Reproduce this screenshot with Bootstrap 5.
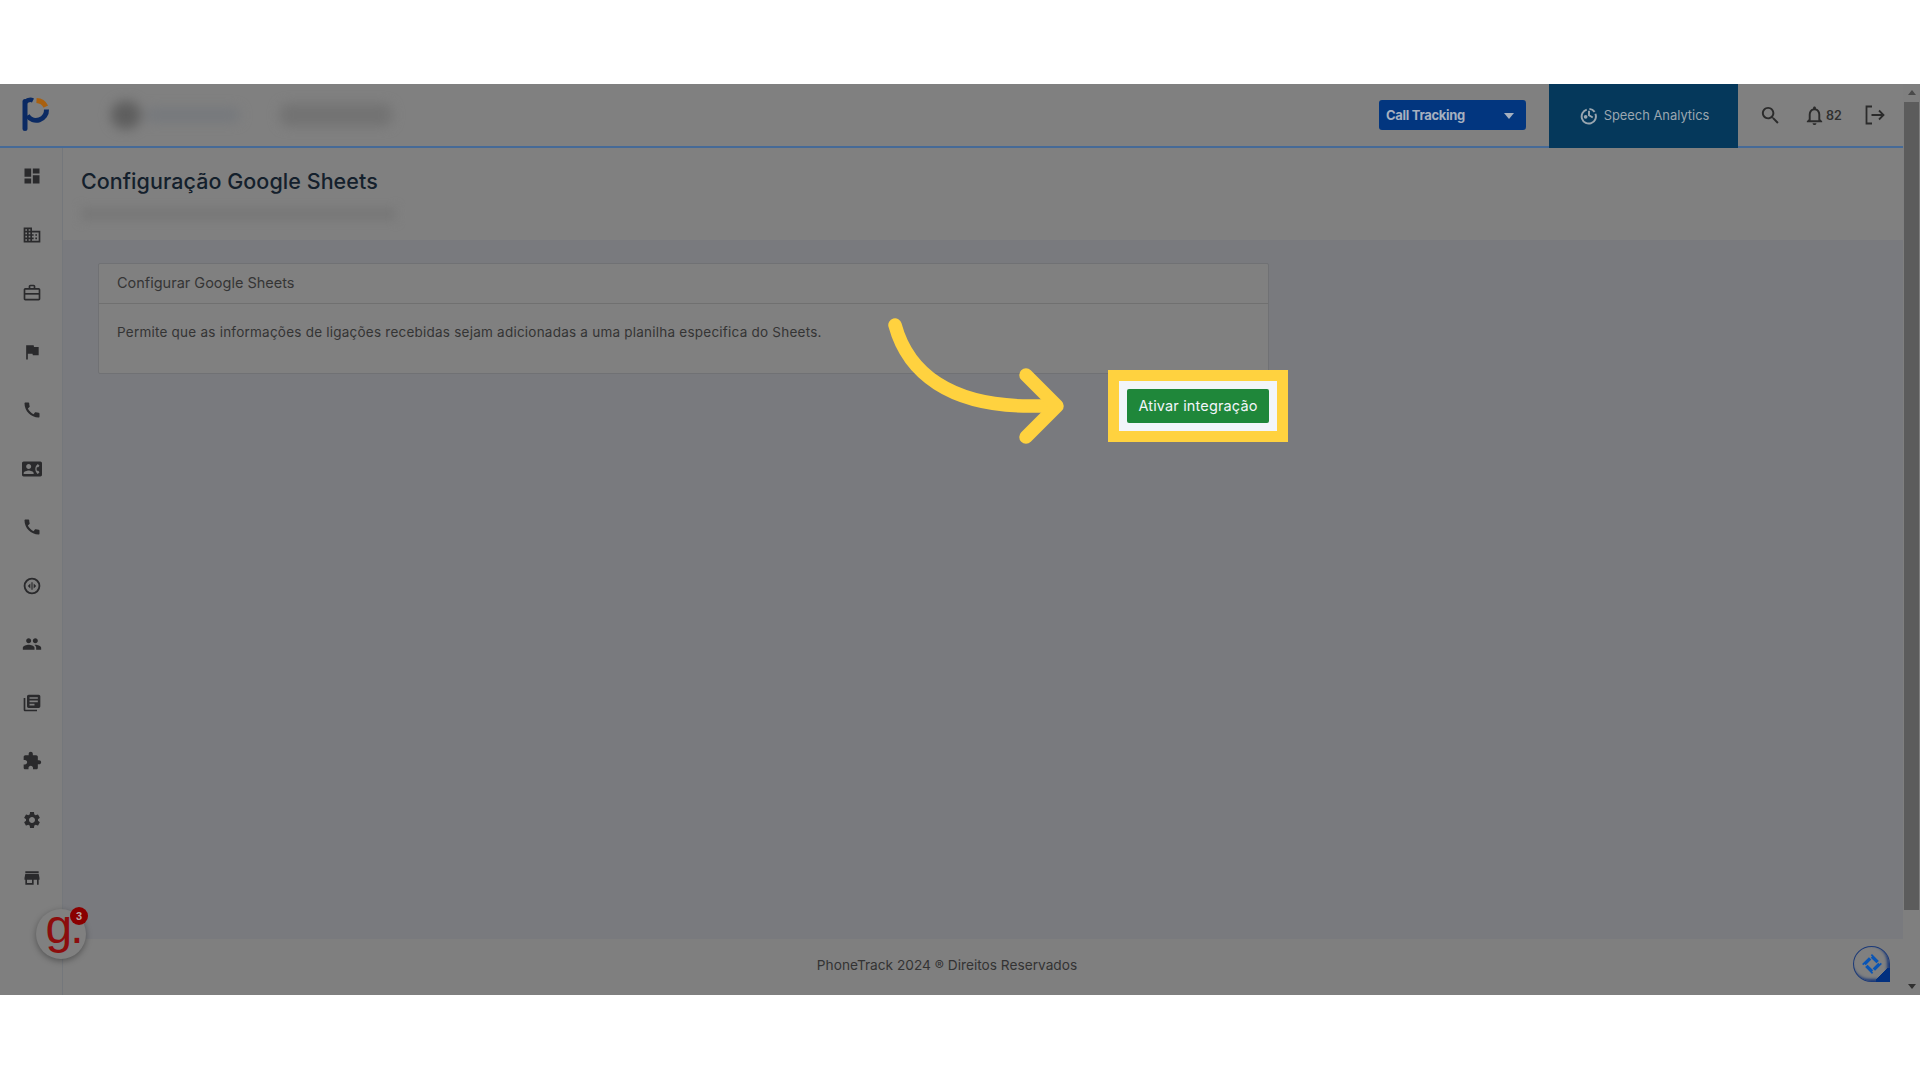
<!DOCTYPE html>
<html lang="pt-BR">
<head>
<meta charset="utf-8">
<title>Configuração Google Sheets</title>
<link href="https://cdn.jsdelivr.net/npm/bootstrap@5.3.0/dist/css/bootstrap.min.css" rel="stylesheet">
<style>
html,body{height:100%;}
body{background:#fff;font-family:"Inter","Open Sans","Liberation Sans",sans-serif;overflow:hidden;padding-top:84px;}
.stage{height:911px;position:relative;background:#797a7e;}
.pagecol{width:1903px;}
.topbar{height:64px;background:#808080;border-bottom:2px solid #466a97;}
.brand-cell{width:20px;margin-left:20px;margin-right:22px;margin-top:-1px;}
.blur-group{filter:blur(6px);}
.chip-a{width:30px;height:28px;border-radius:14px;background:#5e5e5e;margin-left:49px;}
.chip-b{width:95px;height:14px;border-radius:7px;background:#75787c;margin-left:4px;}
.chip-c{width:112px;height:22px;border-radius:8px;background:#727272;margin-left:40px;}
.product-btn{width:147px;height:30px;background:#02367f;border-radius:3px;color:#a6b0bf;font-size:13px;font-weight:700;letter-spacing:-.3px;padding:1px 12px 0 7px;margin-right:23px;}
.caret-down{width:0;height:0;border-left:5px solid transparent;border-right:5px solid transparent;border-top:6px solid #a6b0bf;}
.speech{width:189px;height:64px;margin-bottom:-2px;padding:0 0 1px 2px;gap:6px;background:#05385b;color:#9aa6b0;font-size:12.9px;}
.tool-row{width:165px;padding-left:21px;}
.bell-num{font-size:12.5px;font-weight:600;color:#303030;line-height:1;margin-top:2px;}
.bell-ico{margin-left:21px;}
.out-ico{margin-left:23px;}
.sidebar{width:63px;background:#7f7f7f;border-right:1px solid #74777b;padding-top:18px;padding-left:1px;gap:38.5px;}
.sidebar svg{width:20px;height:20px;display:block;fill:#2a2a2c;}
.titlebar{background:#808080;height:92px;padding:18px 0 0 18px;}
.page-title{font-size:21.5px;font-weight:500;color:#14202c;margin:0;line-height:30px;letter-spacing:.05px;}
.crumb-blur{width:315px;height:14px;background:#787878;filter:blur(5px);margin-top:11px;}
.content-area{padding:23px 0 0 35px;}
.config-card{width:1171px;height:111px;background:#808080;border:1px solid #707174;border-radius:2px;color:#303030;}
.config-head{height:40px;padding:0 18px 2px;border-bottom:1px solid #707070;font-size:14.5px;color:#353535;}
.config-body{padding:18px 18px;font-size:13.5px;letter-spacing:.23px;color:#343434;}
.foot{height:56px;background:#7f7f7f;font-size:13.7px;color:#333;padding-bottom:3px;padding-right:72px;}
.scroll-rail{width:17px;background:#7f7f7f;}
.scroll-thumb{background:#5c5c5c;height:808px;margin:1px 1px 0;}
.tri-up{width:0;height:0;border-left:4px solid transparent;border-right:4px solid transparent;border-bottom:5px solid #4a4a4a;}
.tri-down{width:0;height:0;border-left:4px solid transparent;border-right:4px solid transparent;border-top:5px solid #2f2f2f;}
.rail-end{height:17px;}
.spot{position:absolute;left:1108px;top:286px;width:180px;height:72px;border:11px solid #ffd23f;background:#f2f5fa;}
.spot-btn{background:#1f873a;color:#f2f5fa;font-size:14.5px;font-weight:400;letter-spacing:.15px;width:142px;height:34px;padding:0;border:0;border-radius:2px;}
.pointer{position:absolute;left:880px;top:220px;width:190px;height:150px;}
.g-widget{position:absolute;left:36px;top:825px;width:50px;height:50px;padding-left:5px;border-radius:50%;background:#808080;box-shadow:0 2px 6px rgba(0,0,0,.35);color:#8c0d0d;font-family:"Liberation Sans",sans-serif;font-size:48px;line-height:35px;letter-spacing:-2px;text-align:center;}
.g-count{position:absolute;left:34px;top:-2px;width:18px;height:18px;border-radius:50%;background:#8a0000;color:#b9a6a6;font-size:11px;font-weight:700;letter-spacing:0;line-height:18px;}
.help-widget{position:absolute;left:1853px;top:862px;width:37px;height:36px;border-radius:50% 50% 0 50%;background:#808080;border:1px solid #1c3a78;box-shadow:inset -2px -2px 3px #1c3a78;}
.help-corner{position:absolute;right:-1px;bottom:-1px;width:14px;height:14px;background:linear-gradient(135deg,transparent 40%,#02307f 41%);}
</style>
</head>
<body>
<div class="stage d-flex">
  <div class="pagecol d-flex flex-column">
    <header class="topbar d-flex align-items-center">
      <div class="brand-cell flex-shrink-0">
        <svg width="30" height="38" viewBox="0 0 30 38" fill="none"><path d="M5 5.5v27" stroke="#0b2a63" stroke-width="5" stroke-linecap="round"/><path d="M5 6.5C8 3.5 10 3 13 4.5" stroke="#0b2a63" stroke-width="4.5"/><path d="M16.5 4.6c4 .2 7.5 2.3 9.3 6" stroke="#a9600f" stroke-width="5"/><path d="M26.5 13.5a10.3 10.3 0 0 1-19 6" stroke="#0b2a63" stroke-width="5"/></svg>
      </div>
      <div class="blur-group d-flex align-items-center">
        <div class="chip-a"></div>
        <div class="chip-b"></div>
        <div class="chip-c"></div>
      </div>
      <div class="ms-auto d-flex align-items-center">
        <div class="product-btn d-flex align-items-center justify-content-between"><span>Call Tracking</span><span class="caret-down"></span></div>
        <div class="speech d-flex align-items-center justify-content-center">
          <svg width="18" height="18" viewBox="0 0 24 24" fill="none" stroke="#9aa6b0" stroke-width="2.6"><path d="M9 3.5A9.5 9.5 0 1 0 20.5 9"/><path d="M12.5 2.5a9.5 9.5 0 0 1 7 4"/><path d="M12 5l0 6 5 3"/><circle cx="7.5" cy="13" r="1.2"/></svg>
          <span>Speech Analytics</span>
        </div>
        <div class="tool-row d-flex align-items-center">
          <svg width="23" height="23" viewBox="0 0 24 24" fill="#2b2b2b"><path d="M15.5 14h-.79l-.28-.27C15.41 12.59 16 11.11 16 9.5 16 5.91 13.09 3 9.5 3S3 5.91 3 9.5 5.91 16 9.5 16c1.61 0 3.09-.59 4.23-1.57l.27.28v.79l5 4.99L20.49 19l-4.99-5zm-6 0C7.01 14 5 11.99 5 9.5S7.01 5 9.5 5 14 7.01 14 9.5 11.99 14 9.5 14z"/></svg>
          <svg class="bell-ico" width="23" height="23" viewBox="0 0 24 24" fill="#2b2b2b"><path d="M12 22c1.1 0 2-.9 2-2h-4c0 1.1.9 2 2 2zm6-6v-5c0-3.07-1.63-5.64-4.5-6.32V4c0-.83-.67-1.5-1.5-1.5s-1.5.67-1.5 1.5v.68C7.64 5.36 6 7.92 6 11v5l-2 2v1h16v-1l-2-2zm-2 1H8v-6c0-2.48 1.51-4.5 4-4.5s4 2.02 4 4.5v6z"/></svg>
          <span class="bell-num">82</span>
          <svg class="out-ico" width="20" height="20" viewBox="0 0 20 20" fill="none" stroke="#2b2b2b" stroke-width="1.8"><path d="M7 1.5H1.5v17H7M6.5 10H18.5M14 5.5l4.5 4.5-4.5 4.5"/></svg>
        </div>
      </div>
    </header>
    <div class="d-flex flex-grow-1">
      <nav class="sidebar d-flex flex-column align-items-center flex-shrink-0">
        <svg viewBox="0 0 24 24"><path d="M3 13h8V3H3v10zm0 8h8v-6H3v6zm10 0h8V11h-8v10zm0-18v6h8V3h-8z"/></svg>
        <svg viewBox="0 0 24 24"><path d="M12 7V3H2v18h20V7H12zM6 19H4v-2h2v2zm0-4H4v-2h2v2zm0-4H4V9h2v2zm0-4H4V5h2v2zm4 12H8v-2h2v2zm0-4H8v-2h2v2zm0-4H8V9h2v2zm0-4H8V5h2v2zm10 12h-8v-2h2v-2h-2v-2h2v-2h-2V9h8v10zm-2-8h-2v2h2v-2zm0 4h-2v2h2v-2z"/></svg>
        <svg viewBox="0 0 24 24"><path d="M14 6V4h-4v2h4zM4 8v11h16V8H4zm16-2c1.11 0 2 .89 2 2v11c0 1.11-.89 2-2 2H4c-1.11 0-2-.89-2-2l.01-11c0-1.11.88-2 1.99-2h4V4c0-1.11.89-2 2-2h4c1.11 0 2 .89 2 2v2h4z"/><path d="M3 12h18v2H3z"/></svg>
        <svg viewBox="0 0 24 24"><path d="M14.4 6L14 4H5v17h2v-7h5.6l.4 2h7V6z"/></svg>
        <svg viewBox="0 0 24 24"><path d="M20.01 15.38c-1.23 0-2.42-.2-3.53-.56-.35-.12-.74-.03-1.01.24l-1.57 1.97c-2.83-1.35-5.48-3.9-6.89-6.83l1.95-1.66c.27-.28.35-.67.24-1.02-.37-1.11-.56-2.3-.56-3.53 0-.54-.45-.99-.99-.99H4.19C3.65 3 3 3.24 3 3.99 3 13.28 10.73 21 20.01 21c.71 0 .99-.63.99-1.18v-3.45c0-.54-.45-.99-.99-.99z"/></svg>
        <svg viewBox="0 0 24 24"><path d="M22 3H2C.9 3 0 3.9 0 5v14c0 1.1.9 2 2 2h20c1.1 0 1.99-.9 1.99-2L24 5c0-1.1-.9-2-2-2zM8 6c1.66 0 3 1.34 3 3s-1.34 3-3 3-3-1.34-3-3 1.34-3 3-3zm6 12H2v-1c0-2 4-3.1 6-3.1s6 1.1 6 3.1v1zm3.85-4h1.64L21 16l-1.99 1.99c-1.31-.98-2.28-2.38-2.73-3.99-.18-.64-.28-1.31-.28-2s.1-1.36.28-2c.45-1.62 1.42-3.01 2.73-3.99L21 8l-1.51 2h-1.64c-.22.63-.35 1.3-.35 2s.13 1.37.35 2z"/></svg>
        <svg viewBox="0 0 24 24"><path d="M20.01 15.38c-1.23 0-2.42-.2-3.53-.56-.35-.12-.74-.03-1.01.24l-1.57 1.97c-2.83-1.35-5.48-3.9-6.89-6.83l1.95-1.66c.27-.28.35-.67.24-1.02-.37-1.11-.56-2.3-.56-3.53 0-.54-.45-.99-.99-.99H4.19C3.65 3 3 3.24 3 3.99 3 13.28 10.73 21 20.01 21c.71 0 .99-.63.99-1.18v-3.45c0-.54-.45-.99-.99-.99z"/></svg>
        <svg viewBox="0 0 24 24"><path d="M12 2a10 10 0 1 0 0 20 10 10 0 0 0 0-20zm0 2.2a7.8 7.8 0 1 1 0 15.6 7.8 7.8 0 0 1 0-15.6z"/><path d="M11.3 7.5h1.4v9h-1.4zM10 9v6l-3-3zM14 9l3 3-3 3z"/></svg>
        <svg viewBox="0 0 24 24"><path d="M16 11c1.66 0 2.99-1.34 2.99-3S17.66 5 16 5c-1.66 0-3 1.34-3 3s1.34 3 3 3zm-8 0c1.66 0 2.99-1.34 2.99-3S9.66 5 8 5C6.34 5 5 6.34 5 8s1.34 3 3 3zm0 2c-2.33 0-7 1.17-7 3.5V19h14v-2.5c0-2.33-4.67-3.5-7-3.5zm8 0c-.29 0-.62.02-.97.05 1.16.84 1.97 1.97 1.97 3.45V19h6v-2.5c0-2.33-4.67-3.5-7-3.5z"/></svg>
        <svg viewBox="0 0 24 24"><path d="M4 6H2v14c0 1.1.9 2 2 2h14v-2H4V6zm16-4H8c-1.1 0-2 .9-2 2v12c0 1.1.9 2 2 2h12c1.1 0 2-.9 2-2V4c0-1.1-.9-2-2-2zm-1 9H9V9h10v2zm-4 4H9v-2h6v2zm4-8H9V5h10v2z"/></svg>
        <svg viewBox="0 0 24 24"><path d="M20.5 11H19V7c0-1.1-.9-2-2-2h-4V3.5C13 2.12 11.88 1 10.5 1S8 2.12 8 3.5V5H4c-1.1 0-1.99.9-1.99 2v3.8H3.5c1.49 0 2.7 1.21 2.7 2.7s-1.21 2.7-2.7 2.7H2V20c0 1.1.9 2 2 2h3.8v-1.5c0-1.49 1.21-2.7 2.7-2.7 1.49 0 2.7 1.21 2.7 2.7V22H17c1.1 0 2-.9 2-2v-4h1.5c1.38 0 2.5-1.12 2.5-2.5S21.88 11 20.5 11z"/></svg>
        <svg viewBox="0 0 24 24"><path d="M19.14 12.94c.04-.3.06-.61.06-.94 0-.32-.02-.64-.07-.94l2.03-1.58c.18-.14.23-.41.12-.61l-1.92-3.32c-.12-.22-.37-.29-.59-.22l-2.39.96c-.5-.38-1.03-.7-1.62-.94l-.36-2.54c-.04-.24-.24-.41-.48-.41h-3.84c-.24 0-.43.17-.47.41l-.36 2.54c-.59.24-1.13.57-1.62.94l-2.39-.96c-.22-.08-.47 0-.59.22L2.74 8.87c-.12.21-.08.47.12.61l2.03 1.58c-.05.3-.09.63-.09.94s.02.64.07.94l-2.03 1.58c-.18.14-.23.41-.12.61l1.92 3.32c.12.22.37.29.59.22l2.39-.96c.5.38 1.03.7 1.62.94l.36 2.54c.05.24.24.41.48.41h3.84c.24 0 .44-.17.47-.41l.36-2.54c.59-.24 1.13-.56 1.62-.94l2.39.96c.22.08.47 0 .59-.22l1.92-3.32c.12-.22.07-.47-.12-.61l-2.01-1.58zM12 15.6c-1.98 0-3.6-1.62-3.6-3.6s1.62-3.6 3.6-3.6 3.6 1.62 3.6 3.6-1.62 3.6-3.6 3.6z"/></svg>
        <svg viewBox="0 0 24 24"><path d="M20 4H4v2h16V4zm1 10v-2l-1-5H4l-1 5v2h1v6h10v-6h4v6h2v-6h1zm-9 4H6v-4h6v4z"/></svg>
      </nav>
      <main class="flex-grow-1 d-flex flex-column">
        <div class="titlebar">
          <h1 class="page-title">Configuração Google Sheets</h1>
          <div class="crumb-blur"></div>
        </div>
        <div class="content-area flex-grow-1">
          <div class="config-card">
            <div class="config-head d-flex align-items-center">Configurar Google Sheets</div>
            <div class="config-body">Permite que as informações de ligações recebidas sejam adicionadas a uma planilha especifica do Sheets.</div>
          </div>
        </div>
        <footer class="foot d-flex align-items-center justify-content-center">PhoneTrack 2024 ® Direitos Reservados</footer>
      </main>
    </div>
  </div>
  <div class="scroll-rail d-flex flex-column flex-shrink-0">
    <div class="rail-end d-flex align-items-center justify-content-center"><span class="tri-up"></span></div>
    <div class="scroll-thumb"></div>
    <div class="mt-auto rail-end d-flex align-items-center justify-content-center"><span class="tri-down"></span></div>
  </div>

  <svg class="pointer" viewBox="0 0 190 150" fill="none" stroke="#ffd23f" stroke-width="13.5" stroke-linecap="round" stroke-linejoin="round"><path d="M15 21C28 69 70 102 150 102L175 102"/><path d="M146 71l31 31-31 31"/></svg>
  <div class="spot d-flex align-items-center justify-content-center"><button type="button" class="btn spot-btn">Ativar integração</button></div>

  <div class="g-widget">g.<span class="g-count">3</span></div>
  <div class="help-widget d-flex align-items-center justify-content-center">
    <svg width="20" height="20" viewBox="0 0 20 20" fill="none" stroke="#0a55b5" stroke-width="3.4"><path d="M10 2.5l7.5 7.5-7.5 7.5-7.5-7.5z" stroke-dasharray="8 2.6"/></svg>
    <span class="help-corner"></span>
  </div>
</div>
<script src="https://cdn.jsdelivr.net/npm/bootstrap@5.3.0/dist/js/bootstrap.bundle.min.js"></script>
</body>
</html>
